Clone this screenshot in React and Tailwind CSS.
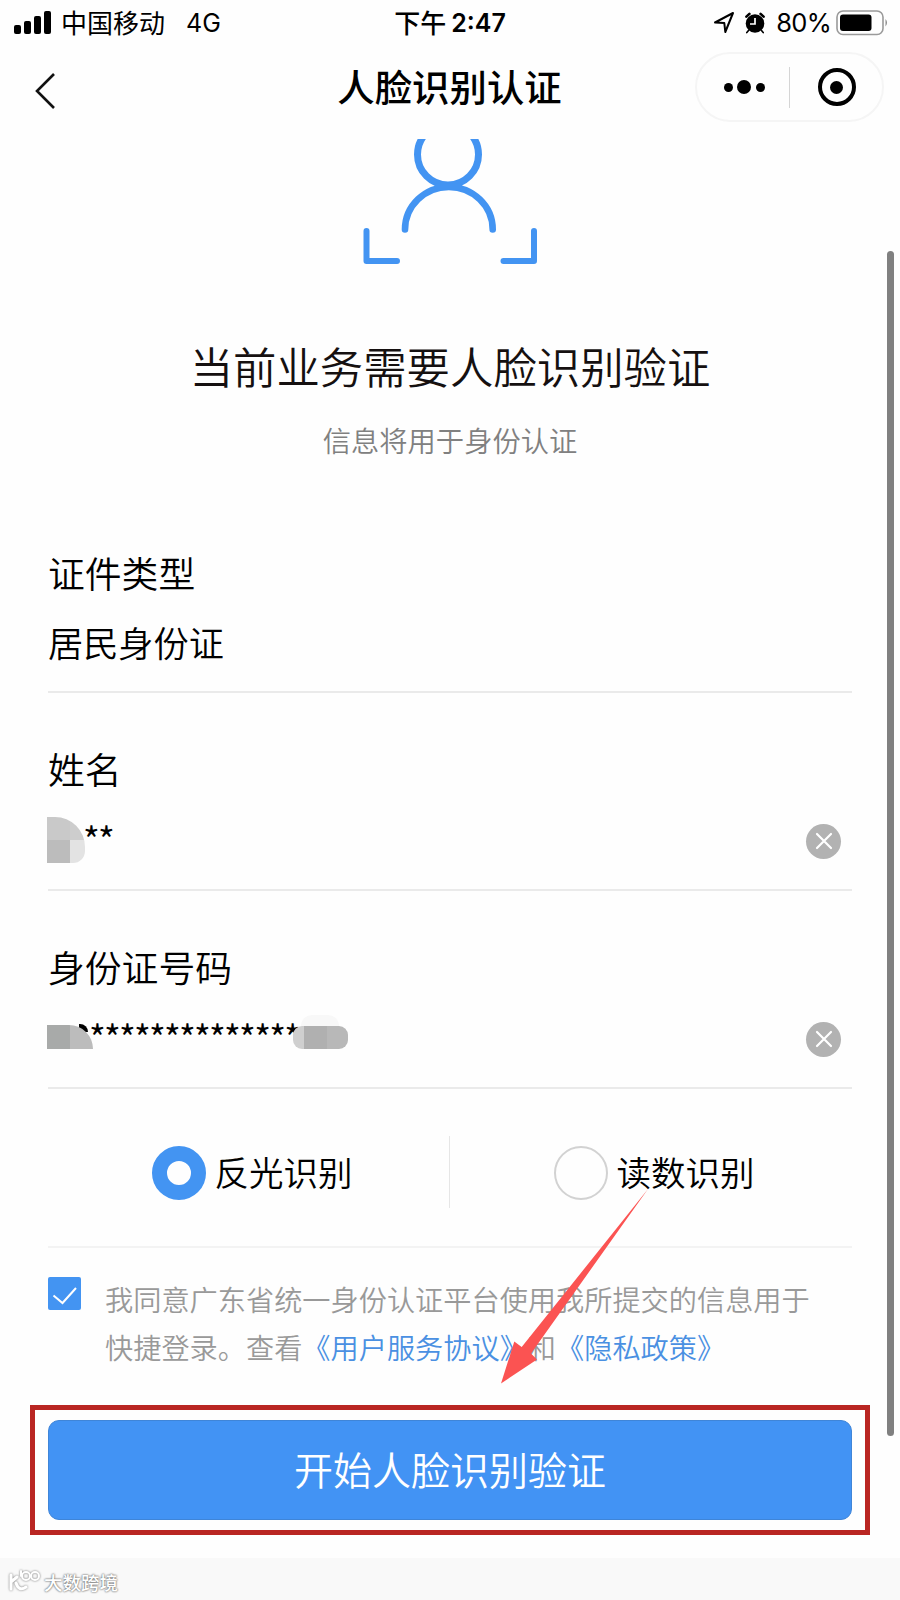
import React, { useState } from "react";

function StatusBar() {
    return (
        <div className="flex h-[46px] items-center text-[26px] leading-none">
            <div className="flex w-[300px] items-center pl-[14px]">
                <div className="-mt-[2px] flex h-[23px] items-end gap-[3.3px]">
                    <span className="h-[9px] w-[6.8px] rounded-[2px] bg-black" />
                    <span className="h-[13px] w-[6.8px] rounded-[2px] bg-black" />
                    <span className="h-[18px] w-[6.8px] rounded-[2px] bg-black" />
                    <span className="h-[23px] w-[6.8px] rounded-[2px] bg-black" />
                </div>
                <span className="-mt-[2px] ml-[10px]">中国移动</span>
                <span className="ml-[21px] font-['Inter'] text-[25px]">4G</span>
            </div>
            <div className="flex w-[300px] items-center justify-center">
                <span className="-mt-[2px] font-medium">下午</span>
                <span className="ml-[5px] font-['Inter'] text-[25px] font-semibold">2:47</span>
            </div>
            <div className="flex w-[300px] items-center justify-end pr-[11px]">
                <svg className="h-[24px] w-[22px]" viewBox="0 0 22 24" fill="none" stroke="#000" strokeWidth="2" strokeLinejoin="round">
                    <path d="M2 11.5 L20 2 L12.3 21 L11.3 12 Z" />
                </svg>
                <svg className="ml-[9px] h-[22px] w-[22px]" viewBox="0 0 22 22">
                    <circle cx="11" cy="11.5" r="9.3" />
                    <path d="M2.4 4.6 L5.4 1.9 M16.6 1.9 L19.6 4.6" stroke="#000" strokeWidth="2.6" strokeLinecap="round" />
                    <path d="M4.5 18.5 L2.8 20.6 M17.5 18.5 L19.2 20.6" stroke="#000" strokeWidth="1.6" strokeLinecap="round" />
                    <path d="M11 6 V12 H6" fill="none" stroke="#fff" strokeWidth="1.7" />
                </svg>
                <span className="ml-[10px] font-['Inter'] text-[25.5px] tracking-[-0.7px]">80%</span>
                <svg className="ml-[5px] h-[26px] w-[53px]" viewBox="0 0 53 26">
                    <rect x="1" y="1" width="46" height="23.5" rx="6" fill="none" stroke="#9a9a9a" strokeWidth="1.6" />
                    <rect x="4" y="4.5" width="31.5" height="16.5" rx="3" />
                    <path d="M49.5 9 Q52.5 12.5 49.5 16.5 Z" fill="#8a8a8a" />
                </svg>
            </div>
        </div>
    );
}

function NavBar() {
    return (
        <div className="flex h-[82px] items-center justify-between pr-[16px] pl-[34px]">
            <svg className="mt-[7px] h-[38px] w-[170px]" viewBox="0 0 170 38" fill="none" stroke="#111" strokeWidth="2.6">
                <path d="M20 2 L3 19 L20 36" />
            </svg>
            <h1 className="-mt-[2px] text-[37.4px] leading-[50px] font-medium">人脸识别认证</h1>
            <div className="flex h-[70px] w-[189px] items-center rounded-full border-2 border-[#f5f5f5]">
                <div className="flex w-[92px] items-center justify-center gap-[4.5px] pl-[3px]">
                    <span className="h-[9px] w-[9px] rounded-full bg-black" />
                    <span className="h-[14px] w-[14px] rounded-full bg-black" />
                    <span className="h-[9px] w-[9px] rounded-full bg-black" />
                </div>
                <div className="h-[41px] w-px bg-[#d5d5d5]" />
                <div className="flex flex-1 items-center justify-center pl-[2px]">
                    <span className="flex h-[38px] w-[38px] items-center justify-center rounded-full border-[4.5px] border-black">
                        <span className="h-[13px] w-[13px] rounded-full bg-black" />
                    </span>
                </div>
            </div>
        </div>
    );
}

function FaceIcon() {
    return (
        <svg className="mx-auto mt-[11px] h-[140px] w-[180px]" viewBox="360 139 180 140" fill="none" stroke="#4394f2" strokeLinecap="round" strokeLinejoin="round">
            <circle cx="448" cy="154.5" r="30.5" strokeWidth="7" />
            <path d="M405 229.5 A43.8 42.5 0 0 1 492.7 229.5" strokeWidth="6.6" />
            <path d="M438 186.5 H459" strokeWidth="6.6" />
            <path d="M366.5 231 V261 H397" strokeWidth="6" />
            <path d="M534 231 V261 H503.5" strokeWidth="6" />
        </svg>
    );
}

function ClearButton({ onClick }) {
    return (
        <button type="button" onClick={onClick} className="mr-[11px] flex h-[35px] w-[35px] items-center justify-center rounded-full bg-[#b2b2b2]">
            <svg className="h-[18px] w-[18px]" viewBox="0 0 18 18" stroke="#fff" strokeWidth="2.2" strokeLinecap="round">
                <path d="M2 2 L16 16 M16 2 L2 16" />
            </svg>
        </button>
    );
}

function Field({ label, children }) {
    return (
        <div className="h-[198px] border-b-2 border-[#eaeaea] pt-[50px]">
            <div className="h-[50px] text-[36.8px] leading-[50px] font-[350]">{label}</div>
            <div className="mt-[23px] flex h-[50px] items-center justify-between">{children}</div>
        </div>
    );
}

function Radio({ label, checked, onClick }) {
    return (
        <button type="button" onClick={onClick} className="flex w-[401px] items-center justify-center pt-[2px] pl-[7px] text-[34.5px] leading-[50px] font-[350]">
            {checked ? (
                <span className="h-[54px] w-[54px] rounded-full border-[15px] border-[#4394f2]" />
            ) : (
                <span className="h-[54px] w-[54px] rounded-full border-2 border-[#d2d2d2]" />
            )}
            <span className="-mt-[5px] ml-[9px]">{label}</span>
        </button>
    );
}

function App() {
    const [mode, setMode] = useState("light");
    const [agreed, setAgreed] = useState(true);

    return (
        <div className="relative h-[1600px] w-[900px] overflow-hidden bg-[#fefefe] font-['Noto_Sans_CJK_SC',sans-serif] text-black">
            <StatusBar />
            <NavBar />
            <FaceIcon />
            <h2 className="mt-[56px] h-[60px] text-center text-[43.4px] leading-[60px] font-[350] text-[#151010]">当前业务需要人脸识别验证</h2>
            <p className="mt-[30px] h-[30px] text-center text-[28.3px] leading-[30px] font-[350] text-[#808080]">信息将用于身份认证</p>

            <div className="mt-[40px] ml-[48px] w-[804px]">
                <Field label={<span className="relative top-[2px]">证件类型</span>}>
                    <span className="-mt-[3px] text-[35.2px] leading-[50px] font-[350]">居民身份证</span>
                </Field>
                <Field label="姓名">
                    <div className="relative h-[50px] flex-1 pl-[35px] text-[36px] leading-[44px] tracking-[-1.8px]">
                        **
                        {/* mosaic over the surname */}
                        <div className="absolute top-[1px] -left-px grid h-[46px] w-[38px] grid-cols-[23px_15px] grid-rows-2 overflow-hidden rounded-tr-[30px] rounded-br-[12px]">
                            <span className="bg-[#c9c9c9]" />
                            <span className="bg-[#cdcdcd]" />
                            <span className="bg-[#bcbcbc]" />
                            <span className="bg-[#e3e3e3]" />
                        </div>
                    </div>
                    <ClearButton />
                </Field>
                <Field label="身份证号码">
                    <div className="relative h-[50px] flex-1 pl-[41px] text-[36px] leading-[44px] tracking-[-1.8px]">
                        **************
                        <span className="absolute top-[10px] left-[31px] h-[8px] w-[9px] rounded-tr-[8px] bg-black" />
                        <div className="absolute top-[11px] -left-px flex h-[24px] w-[46px] overflow-hidden rounded-tr-[24px]">
                            <span className="w-[23px] bg-[#a8aaa9]" />
                            <span className="flex-1 bg-[#bcbcbc]" />
                        </div>
                        <div className="absolute top-px left-[253px] h-[11px] w-[38px] rounded-t-full bg-[#f8f8f8]" />
                        <div className="absolute top-[12px] left-[245px] flex h-[23px] w-[55px] overflow-hidden rounded-[9px]">
                            <span className="w-[11px] bg-[#cfcfcf]" />
                            <span className="w-[23px] bg-[#b0b0b0]" />
                            <span className="flex-1 bg-[#b8b8b8]" />
                        </div>
                    </div>
                    <ClearButton />
                </Field>

                <div className="border-b-2 border-[#f3f3f3] pt-[47px] pb-[38px]">
                    <div className="flex h-[72px] items-center">
                        <Radio label="反光识别" checked={mode === "light"} onClick={() => setMode("light")} />
                        <div className="h-[72px] w-px bg-[#e6e6e6]" />
                        <Radio label="读数识别" checked={mode === "number"} onClick={() => setMode("number")} />
                    </div>
                </div>

                <div className="flex h-[123px] pt-[27px]">
                    <button
                        type="button"
                        onClick={() => setAgreed(!agreed)}
                        className="mt-[2px] flex h-[33px] w-[33px] items-center justify-center rounded-[2px] bg-[#4394f2]"
                    >
                        {agreed && (
                            <svg className="h-[33px] w-[33px]" viewBox="0 0 33 33" fill="none" stroke="#fff" strokeWidth="2">
                                <path d="M5.5 18.5 L14.5 26 L28 11" />
                            </svg>
                        )}
                    </button>
                    <p className="ml-[24px] text-[28.2px] leading-[48px] font-[350] whitespace-nowrap text-[#999]">
                        我同意广东省统一身份认证平台使用我所提交的信息用于
                        <br />
                        快捷登录。查看<a className="text-[#4a90e2]">《用户服务协议》</a>和<a className="text-[#4a90e2]">《隐私政策》</a>
                    </p>
                </div>
            </div>

            <div className="mt-[34px] ml-[30px] h-[130px] w-[840px] border-[5px] border-[#b92622] px-[13px] py-[10px]">
                <button type="button" className="h-[100px] w-full rounded-[11px] border border-[#3f85d8] bg-[#4293f4] pb-[4px] text-[39px] leading-none font-[350] text-white">
                    开始人脸识别验证
                </button>
            </div>

            <div className="mt-[23px] flex h-[42px] items-center bg-[#f9f9f9] pl-[8px]">
                <svg className="mt-[4px] h-[24px] w-[34px] drop-shadow-[0_0_1px_#777]" viewBox="0 0 34 24" fill="none" stroke="#fff" strokeWidth="3" strokeLinecap="round">
                    <path d="M3 6 V20 M3 13 L9 8" />
                    <path d="M8 14 Q11 23 18 18" />
                    <circle cx="18" cy="7" r="4" strokeWidth="2" />
                    <circle cx="27" cy="7" r="4" strokeWidth="2" />
                    <path d="M13 2 V7" strokeWidth="2" />
                </svg>
                <span className="mt-[7px] ml-[2px] text-[18.5px] leading-none font-medium text-white [text-shadow:0_0_2px_#666,0_0_2px_#888]">大数跨境</span>
            </div>

            {/* scrollbar */}
            <div className="absolute top-[251px] left-[887px] h-[1185px] w-[7px] rounded-full bg-[#808080]" />

            {/* arrow pointing at the submit button */}
            <svg className="pointer-events-none absolute top-[1180px] left-[490px] h-[210px] w-[170px]" viewBox="490 1180 170 210">
                <path d="M648 1189 L521.7 1347 L514.3 1341.5 L501 1383.5 L537 1359.5 L531 1353.5 Z" fill="#fb5352" />
            </svg>
        </div>
    );
}

export default App;
